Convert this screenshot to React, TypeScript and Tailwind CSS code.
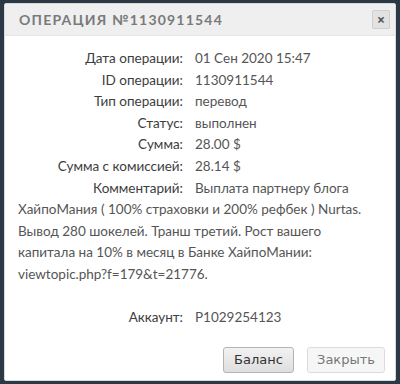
const rows: [string, string][] = [
  ["Дата операции:", "01 Сен 2020 15:47"],
  ["ID операции:", "1130911544"],
  ["Тип операции:", "перевод"],
  ["Статус:", "выполнен"],
  ["Сумма:", "28.00 $"],
  ["Сумма с комиссией:", "28.14 $"],
];

const comment =
  "Выплата партнеру блога ХайпоМания ( 100% страховки и 200% рефбек ) Nurtas. Вывод 280 шокелей. Транш третий. Рост вашего капитала на 10% в месяц в Банке ХайпоМании: viewtopic.php?f=179&t=21776.";

function Label({ children }: { children: string }) {
  return (
    <span className="inline-block w-[165px] mr-[12px] text-right text-[#3d3d3d]">
      {children}
    </span>
  );
}

export default function App() {
  return (
    <div className="w-[400px] h-[384px] bg-[#2b3845] pt-[3px] px-[4px] overflow-hidden">
      <div className="h-[378px] bg-white border border-[#d9d9d9] rounded-[2px] flex flex-col">
        {/* HEADER */}
        <div className="h-[32px] bg-[#efefef] flex items-center justify-between pl-[14px] pr-[5px] border-b border-[#e6e6e6]">
          <h2
            className="text-[14px] font-bold tracking-[1.2px] text-[#7a7a7a]"
            style={{ fontFamily: "Lato, 'Noto Sans', sans-serif" }}
          >
            ОПЕРАЦИЯ №1130911544
          </h2>
          <button className="w-[18px] h-[19px] rounded-[2px] border border-[#cfcfcf] bg-[#e2e2e2] flex items-center justify-center text-[#555] text-[14px] font-bold leading-none">
            ×
          </button>
        </div>

        {/* CONTENT */}
        <div
          className="pt-[12px] pl-[13px] pr-[14px] text-[13.5px] leading-[21.6px] text-[#555]"
          style={{ fontFamily: "Lato, 'Noto Sans', sans-serif" }}
        >
          {rows.map(([label, value]) => (
            <div key={label}>
              <Label>{label}</Label>
              <span>{value}</span>
            </div>
          ))}
          <p>
            <Label>Комментарий:</Label>
            {comment}
          </p>
          <div className="mt-[21.6px]">
            <Label>Аккаунт:</Label>
            <span>P1029254123</span>
          </div>
        </div>

        {/* BUTTONS */}
        <div
          className="flex justify-end gap-[13px] pr-[10px] mt-[18px]"
          style={{ fontFamily: "'DejaVu Sans', sans-serif" }}
        >
          <button className="w-[71px] h-[26px] rounded-[3px] border border-[#b4b4b4] bg-gradient-to-b from-[#f2f2f2] to-[#dedede] text-[13px] text-[#333]">
            Баланс
          </button>
          <button className="w-[78px] h-[26px] rounded-[3px] border border-[#dcdcdc] bg-[#f6f6f6] text-[13px] text-[#777]">
            Закрыть
          </button>
        </div>
      </div>
    </div>
  );
}
